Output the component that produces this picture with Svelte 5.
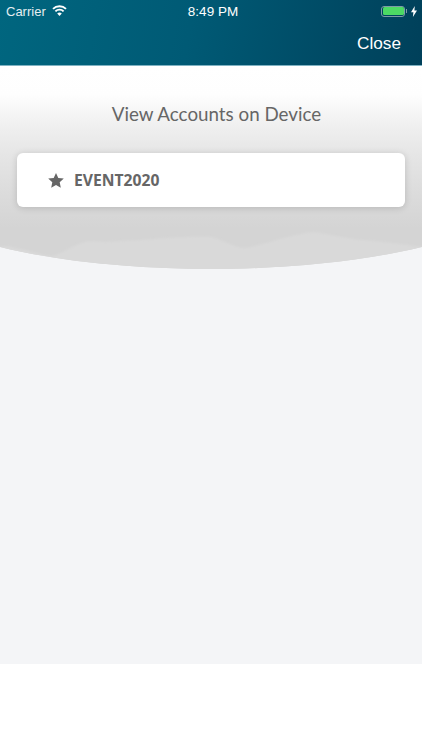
<script>
	let accounts = ['EVENT2020'];
</script>

<div class="page">
	<header class="topbar">
		<div class="status">
			<div class="status-left">
				<span>Carrier</span>
				<svg class="wifi" width="15" height="11" viewBox="0 0 15 11" fill="none" stroke="#fff" stroke-width="1.9">
					<path d="M1 3.9a9.2 9.2 0 0 1 13 0" />
					<path d="M3.4 6.3a5.8 5.8 0 0 1 8.2 0" />
					<path d="M7.5 11 5.2 8.6a3.2 3.2 0 0 1 4.6 0z" fill="#fff" stroke="none" />
				</svg>
			</div>
			<span class="time">8:49 PM</span>
			<div class="status-right">
				<span class="battery"><span class="level"></span></span>
				<span class="nub"></span>
				<svg width="6" height="11" viewBox="0 0 6 11" fill="#fff">
					<path d="M3.8 0 0 6.2h2.4L1.9 11 6 4.4H3.4z" />
				</svg>
			</div>
		</div>
		<div class="nav">
			<button class="close">Close</button>
		</div>
	</header>

	<main class="content">
		<section class="hero">
			<svg class="hero-bg" width="422" height="203" viewBox="0 0 422 203" preserveAspectRatio="none">
				<defs>
					<linearGradient id="heroFade" x1="0" y1="0" x2="0" y2="1">
						<stop offset="0" stop-color="#ffffff" />
						<stop offset="0.14" stop-color="#fefefe" />
						<stop offset="0.3" stop-color="#efefef" />
						<stop offset="0.43" stop-color="#e6e6e6" />
						<stop offset="0.62" stop-color="#dcdcdc" />
						<stop offset="0.8" stop-color="#d4d4d4" />
						<stop offset="1" stop-color="#d4d4d4" />
					</linearGradient>
					<clipPath id="heroCurve">
						<path d="M0 0H422V181C360 196 280 203 211 203C140 203 60 196 0 181Z" />
					</clipPath>
					<filter id="soft" x="-5%" y="-20%" width="110%" height="140%">
						<feGaussianBlur stdDeviation="1.2" />
					</filter>
				</defs>
				<path d="M0 0H422V181C360 196 280 203 211 203C140 203 60 196 0 181Z" fill="url(#heroFade)" />
				<g clip-path="url(#heroCurve)">
					<path d="M0 181C5 179 10 180 16 182C30 184 42 190 53 190C66 186 76 176 92 175C110 177 126 174 142 174C166 172 190 170 211 171C224 174 234 182 246 182C266 178 292 168 314 166C330 168 346 173 364 174C384 176 404 178 422 181V210H0Z" fill="#d9d9d9" filter="url(#soft)" />
				</g>
			</svg>
			<h1>View Accounts on Device</h1>
			<ul class="accounts">
				{#each accounts as account}
					<li class="account">
						<svg width="16" height="15" viewBox="0 0 16 15" fill="#666">
							<path d="M8 0l2.3 5 5.5.6-4.1 3.7 1.1 5.4L8 12l-4.8 2.7 1.1-5.4L.2 5.6 5.7 5z" />
						</svg>
						<span>{account}</span>
					</li>
				{/each}
			</ul>
		</section>
	</main>
</div>

<style>
	:global(body) {
		margin: 0;
		background: #fff;
	}

	.page {
		width: 422px;
		height: 750px;
		display: flex;
		flex-direction: column;
		overflow: hidden;
		background: #fff;
		font-family: "Open Sans", "Noto Sans", sans-serif;
	}

	.topbar {
		height: 65px;
		flex: none;
		border-bottom: 1px solid #7fb2c2;
		background: linear-gradient(100deg, #00667f 0%, #005a75 45%, #00405a 100%);
		color: #fff;
		font-family: "Liberation Sans", Arial, sans-serif;
	}

	.status {
		height: 22px;
		padding: 0 5px 0 6px;
		display: grid;
		grid-template-columns: 1fr auto 1fr;
		align-items: center;
		font-size: 13px;
	}

	.status-left {
		display: flex;
		align-items: center;
		gap: 6px;
		color: #e6eef1;
	}

	.wifi {
		margin-top: -2px;
	}

	.time {
		font-weight: 500;
		font-size: 13.5px;
		padding-left: 3px;
	}

	.status-right {
		display: flex;
		align-items: center;
		justify-content: flex-end;
		gap: 1px;
	}

	.battery {
		width: 21px;
		height: 8px;
		padding: 0.5px;
		border: 1px solid #7d9ba6;
		border-radius: 3px;
		box-sizing: content-box;
		display: block;
	}

	.level {
		display: block;
		width: 100%;
		height: 100%;
		background: #4cd964;
		border-radius: 1.5px;
	}

	.nub {
		width: 1px;
		height: 4px;
		background: #7d9ba6;
		margin-right: 3px;
	}

	.nav {
		height: 43px;
		display: flex;
		align-items: center;
		justify-content: flex-end;
		padding: 0 21px 0 0;
	}

	.close {
		border: none;
		background: none;
		padding: 0;
		color: #fff;
		font: inherit;
		font-size: 17.2px;
	}

	.content {
		height: 598px;
		flex: none;
		background: #f4f5f7;
	}

	.hero {
		position: relative;
		height: 203px;
		padding: 0 17px;
	}

	.hero-bg {
		position: absolute;
		top: 0;
		left: 0;
	}

	h1 {
		position: relative;
		margin: 0;
		padding: 34px 0 0 11px;
		height: 53px;
		line-height: 28px;
		text-align: center;
		font-family: Lato, "Open Sans", sans-serif;
		font-size: 18.8px;
		font-weight: 400;
		color: #666;
	}

	.accounts {
		position: relative;
		margin: 0;
		padding: 0;
		list-style: none;
	}

	.account {
		height: 54px;
		padding-left: 31px;
		display: flex;
		align-items: center;
		gap: 10px;
		background: #fff;
		border-radius: 6px;
		box-shadow: 0 1px 7px rgba(0, 0, 0, 0.16);
		font-size: 15.7px;
		font-weight: 700;
		color: #666;
	}
</style>
